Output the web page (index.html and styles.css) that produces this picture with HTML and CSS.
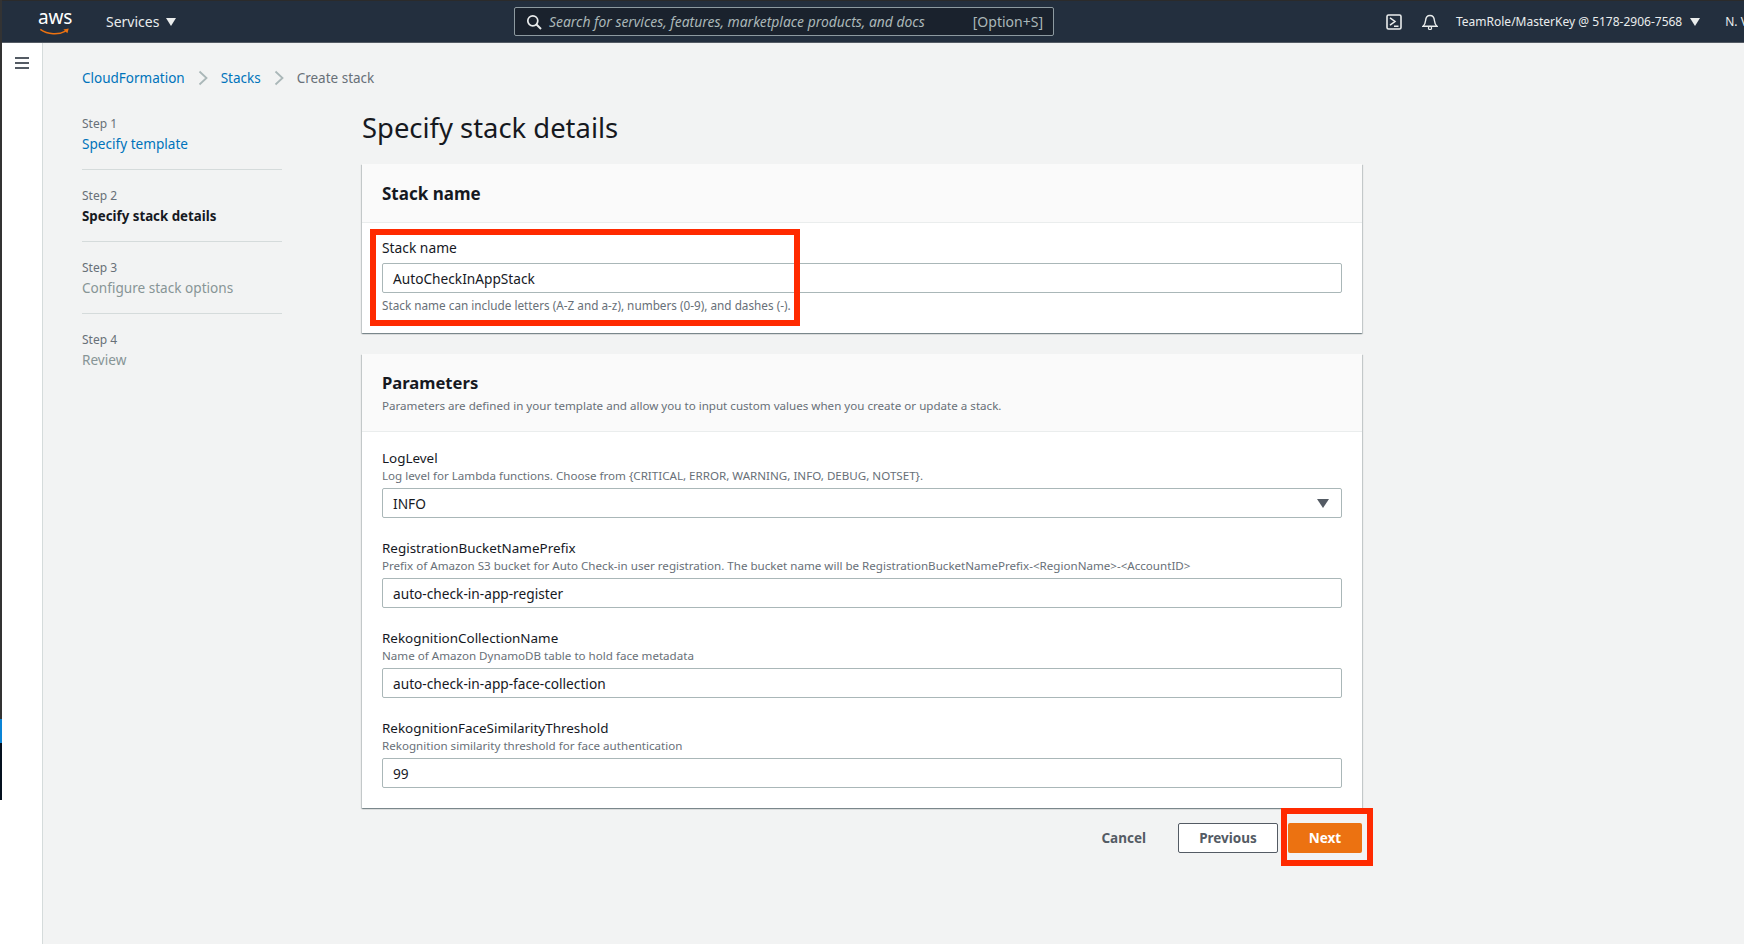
FILE: index.html
```html
<!DOCTYPE html>
<html lang="en">

<head>
    <meta charset="UTF-8">
    <title>CloudFormation - Create stack</title>
    <link rel="stylesheet" href="styles.css">
</head>

<body>
    <div class="edge-strip"></div>

    <header class="topbar">
        <a class="logo">
            <span class="logo-text">aws</span>
            <svg class="logo-smile" width="33" height="9" viewBox="0 0 33 9">
                <path d="M0.5 1.5C9 7.5 21 8 29 3.5" fill="none" stroke="#ec7211" stroke-width="1.8" />
                <path d="M26.5 1.6L32.5 0.6L31 6Z" fill="#ec7211" />
            </svg>
        </a>
        <a class="services">Services <span class="caret caret-big"></span></a>
        <div class="search">
            <svg width="16" height="16" viewBox="0 0 16 16">
                <circle cx="6.8" cy="6.8" r="5" fill="none" stroke="#eaeded" stroke-width="1.7" />
                <path d="M10.5 10.5L15 15" stroke="#eaeded" stroke-width="2" />
            </svg>
            <span class="search-text">Search for services, features, marketplace products, and docs</span>
            <span class="search-key">[Option+S]</span>
        </div>
        <svg class="top-icon terminal" width="16" height="16" viewBox="0 0 16 16">
            <rect x="1" y="1" width="14" height="14" rx="1.5" fill="none" stroke="#eaeded" stroke-width="1.6" />
            <path d="M4 3.8L9 7.5L4 11.2M8 12.2H12.5" fill="none" stroke="#eaeded" stroke-width="1.5" />
        </svg>
        <svg class="top-icon bell" width="16" height="16" viewBox="0 0 16 16">
            <path d="M1 12.2C3 10.5 3.4 9 3.6 6.5C3.8 3.5 5.6 1.5 8 1.5C10.4 1.5 12.2 3.5 12.4 6.5C12.6 9 13 10.5 15 12.2Z" fill="none" stroke="#eaeded" stroke-width="1.4" />
            <circle cx="8" cy="14" r="1.6" fill="none" stroke="#eaeded" stroke-width="1.2" />
        </svg>
        <a class="account">TeamRole/MasterKey @ 5178-2906-7568</a>
        <span class="caret"></span>
        <a class="region">N. Virginia</a>
    </header>

    <div class="shell">
        <aside class="rail">
            <div class="burger"><span></span><span></span><span></span></div>
        </aside>

        <main class="main">
            <nav class="crumbs">
                <a href="#">CloudFormation</a>
                <svg width="10" height="16" viewBox="0 0 10 16"><path d="M1.5 1.5L8.5 8L1.5 14.5" fill="none" stroke="#aab7b8" stroke-width="1.8" /></svg>
                <a href="#">Stacks</a>
                <svg width="10" height="16" viewBox="0 0 10 16"><path d="M1.5 1.5L8.5 8L1.5 14.5" fill="none" stroke="#aab7b8" stroke-width="1.8" /></svg>
                <span>Create stack</span>
            </nav>

            <div class="wizard">
                <ul class="steps">
                    <li>
                        <small>Step 1</small>
                        <a href="#">Specify template</a>
                    </li>
                    <li>
                        <small>Step 2</small>
                        <strong>Specify stack details</strong>
                    </li>
                    <li>
                        <small>Step 3</small>
                        <span>Configure stack options</span>
                    </li>
                    <li>
                        <small>Step 4</small>
                        <span>Review</span>
                    </li>
                </ul>

                <section class="content">
                    <h1>Specify stack details</h1>

                    <div class="card card-name">
                        <div class="card-head">
                            <h2>Stack name</h2>
                        </div>
                        <div class="card-body">
                            <div class="field">
                                <label>Stack name</label>
                                <div class="input">AutoCheckInAppStack</div>
                                <p class="hint hint-below">Stack name can include letters (A-Z and a-z), numbers (0-9), and dashes (-).</p>
                            </div>
                        </div>
                        <div class="callout callout-name"></div>
                    </div>

                    <div class="card card-params">
                        <div class="card-head card-head-desc">
                            <h2>Parameters</h2>
                            <p class="hint">Parameters are defined in your template and allow you to input custom values when you create or update a stack.</p>
                        </div>
                        <div class="card-body params">
                            <div class="field">
                                <label>LogLevel</label>
                                <p class="hint">Log level for Lambda functions. Choose from {CRITICAL, ERROR, WARNING, INFO, DEBUG, NOTSET}.</p>
                                <div class="input select">INFO <span class="select-arrow"></span></div>
                            </div>
                            <div class="field">
                                <label>RegistrationBucketNamePrefix</label>
                                <p class="hint">Prefix of Amazon S3 bucket for Auto Check-in user registration. The bucket name will be RegistrationBucketNamePrefix-&lt;RegionName&gt;-&lt;AccountID&gt;</p>
                                <div class="input">auto-check-in-app-register</div>
                            </div>
                            <div class="field">
                                <label>RekognitionCollectionName</label>
                                <p class="hint">Name of Amazon DynamoDB table to hold face metadata</p>
                                <div class="input">auto-check-in-app-face-collection</div>
                            </div>
                            <div class="field">
                                <label>RekognitionFaceSimilarityThreshold</label>
                                <p class="hint">Rekognition similarity threshold for face authentication</p>
                                <div class="input">99</div>
                            </div>
                        </div>
                    </div>

                    <div class="actions">
                        <a class="btn btn-link">Cancel</a>
                        <a class="btn btn-normal">Previous</a>
                        <a class="btn btn-primary">Next</a>
                        <div class="callout callout-next"></div>
                    </div>
                </section>
            </div>
        </main>
    </div>
</body>

</html>
```

FILE: styles.css
```css
* {
    box-sizing: border-box;
}

html,
body {
    height: 100%;
}

body {
    font-family: "Noto Sans", "Open Sans", Arial, sans-serif;
    font-size: 14px;
    margin: 0;
    padding: 0;
    overflow: hidden;
    background-color: #fff;
    color: #16191f;
}

.edge-strip {
    position: absolute;
    left: 0;
    top: 0;
    width: 2px;
    height: 800px;
    background: linear-gradient(#333 0, #333 719px, #0a84d6 719px, #0a84d6 743px, #04101e 743px);
    z-index: 5;
}

/* top bar */
.topbar {
    display: flex;
    align-items: center;
    height: 43px;
    padding-left: 38px;
    background-color: #232f3e;
    border-top: 1px solid #2b2b2b;
    border-bottom: 1px solid #545b64;
    color: #eaeded;
    white-space: nowrap;
    overflow: hidden;
}

.logo {
    display: flex;
    flex-direction: column;
    flex: none;
    width: 33px;
    height: 28px;
    margin-right: 35px;
}

.logo-text {
    font-size: 19px;
    line-height: 19px;
    letter-spacing: -0.2px;
    color: #fff;
}

.logo-smile {
    margin-top: 1px;
}

.services {
    display: flex;
    align-items: center;
    flex: none;
    gap: 7px;
    width: 408px;
    font-size: 14px;
}

.caret {
    flex: none;
    width: 0;
    height: 0;
    border-left: 5px solid transparent;
    border-right: 5px solid transparent;
    border-top: 8px solid #eaeded;
}

.search {
    display: flex;
    align-items: center;
    gap: 7px;
    flex: none;
    width: 540px;
    height: 29px;
    padding: 0 10px 0 11px;
    background-color: #1a222d;
    border: 1px solid #8d9aa0;
    border-radius: 2px;
    color: #aab7b8;
}

.search-text {
    flex: 1;
    font-style: italic;
    font-size: 13.9px;
}

.search-key {
    font-size: 14px;
}

.top-icon {
    flex: none;
}

.terminal {
    margin-left: 332px;
}

.bell {
    margin-left: 20px;
}

.account {
    flex: none;
    margin-left: 18px;
    margin-right: 8px;
    font-size: 12px;
}

.region {
    flex: none;
    margin-left: 25px;
    font-size: 12px;
}

/* page */
.shell {
    display: flex;
    height: calc(100% - 43px);
}

.rail {
    flex: none;
    width: 43px;
    background-color: #fff;
    border-right: 1px solid #d5dbdb;
    padding: 14px 0 0 15px;
}

.burger span {
    display: block;
    width: 14px;
    height: 2px;
    margin-bottom: 3px;
    background-color: #545b64;
}

.main {
    flex: 1;
    background-color: #f2f3f3;
    padding: 22px 0 0 39px;
}

.crumbs {
    display: flex;
    align-items: center;
    gap: 13px;
    height: 26px;
    font-size: 13.5px;
    color: #687078;
}

.crumbs a,
.steps a {
    color: #0073bb;
    text-decoration: none;
}

.wizard {
    display: flex;
    margin-top: 7px;
}

.steps {
    flex: none;
    width: 200px;
    margin: 0 80px 0 0;
    padding: 0;
    list-style: none;
}

.steps li {
    height: 72px;
    padding-top: 18px;
    border-bottom: 1px solid #d5dbdb;
    line-height: 20px;
    font-size: 13.6px;
    color: #879596;
}

.steps li:last-child {
    border-bottom: none;
}

.steps small {
    display: block;
    font-size: 12px;
    line-height: 16px;
    color: #687078;
    margin-bottom: 2px;
}

.steps strong {
    font-size: 13.3px;
    color: #16191f;
}

.content {
    flex: none;
    width: 1000px;
    padding-top: 11px;
}

h1 {
    margin: 0 0 17px;
    font-size: 27.4px;
    font-weight: 400;
    line-height: 38px;
    color: #16191f;
}

.card {
    position: relative;
    margin-bottom: 21px;
    background-color: #fff;
    box-shadow: 0 1px 1px 0 rgba(0, 28, 36, 0.3), 1px 1px 1px 0 rgba(0, 28, 36, 0.15), -1px 1px 1px 0 rgba(0, 28, 36, 0.15);
}

.card-params {
    margin-bottom: 15px;
}

.card-head {
    height: 59px;
    padding: 16px 20px;
    background-color: #fafafa;
    border-bottom: 1px solid #eaeded;
}

.card-head-desc {
    height: 78px;
    padding-top: 15px;
}

h2 {
    margin: 0;
    font-size: 17px;
    font-weight: 700;
    line-height: 28px;
}

.card-head-desc h2 {
    font-size: 16.6px;
}

.card-head-desc .hint {
    margin-top: 1px;
}

.card-body {
    padding: 15px 20px 20px;
}

.params {
    padding-top: 16px;
}

.field {
    margin-bottom: 20px;
}

.field:last-child {
    margin-bottom: 0;
}

.field label {
    display: block;
    font-size: 13.8px;
    line-height: 20px;
}

.params label {
    font-size: 13.45px;
}

.hint {
    margin: 0;
    font-size: 11.6px;
    line-height: 16px;
    color: #687078;
}

.hint-below {
    margin-top: 4px;
    font-size: 11.75px;
}

.input {
    display: flex;
    align-items: center;
    height: 30px;
    margin-top: 4px;
    padding: 0 10px;
    background-color: #fff;
    border: 1px solid #aab7b8;
    border-radius: 2px;
    font-size: 13.7px;
}

.card-name .input {
    margin-top: 5px;
}

.select {
    justify-content: space-between;
}

.select-arrow {
    width: 0;
    height: 0;
    margin-right: 2px;
    border-left: 6px solid transparent;
    border-right: 6px solid transparent;
    border-top: 9px solid #545b64;
}

.actions {
    position: relative;
    display: flex;
    justify-content: flex-end;
    align-items: center;
    gap: 10px;
    height: 30px;
}

.btn {
    display: flex;
    align-items: center;
    justify-content: center;
    height: 30px;
    font-size: 13.5px;
    font-weight: 700;
    border-radius: 2px;
    color: #545b64;
}

.btn-link {
    padding-right: 22px;
}

.btn-normal {
    width: 100px;
    background-color: #fff;
    border: 1px solid #545b64;
}

.btn-primary {
    width: 74px;
    background-color: #ec7211;
    color: #fff;
}

/* red annotation boxes drawn over the screenshot */
.callout {
    position: absolute;
    border: 6px solid #ff2a00;
    pointer-events: none;
}

.callout-name {
    left: 8px;
    top: 65px;
    width: 430px;
    height: 97px;
}

.callout-next {
    right: -11px;
    top: -15px;
    width: 92px;
    height: 58px;
}
```
